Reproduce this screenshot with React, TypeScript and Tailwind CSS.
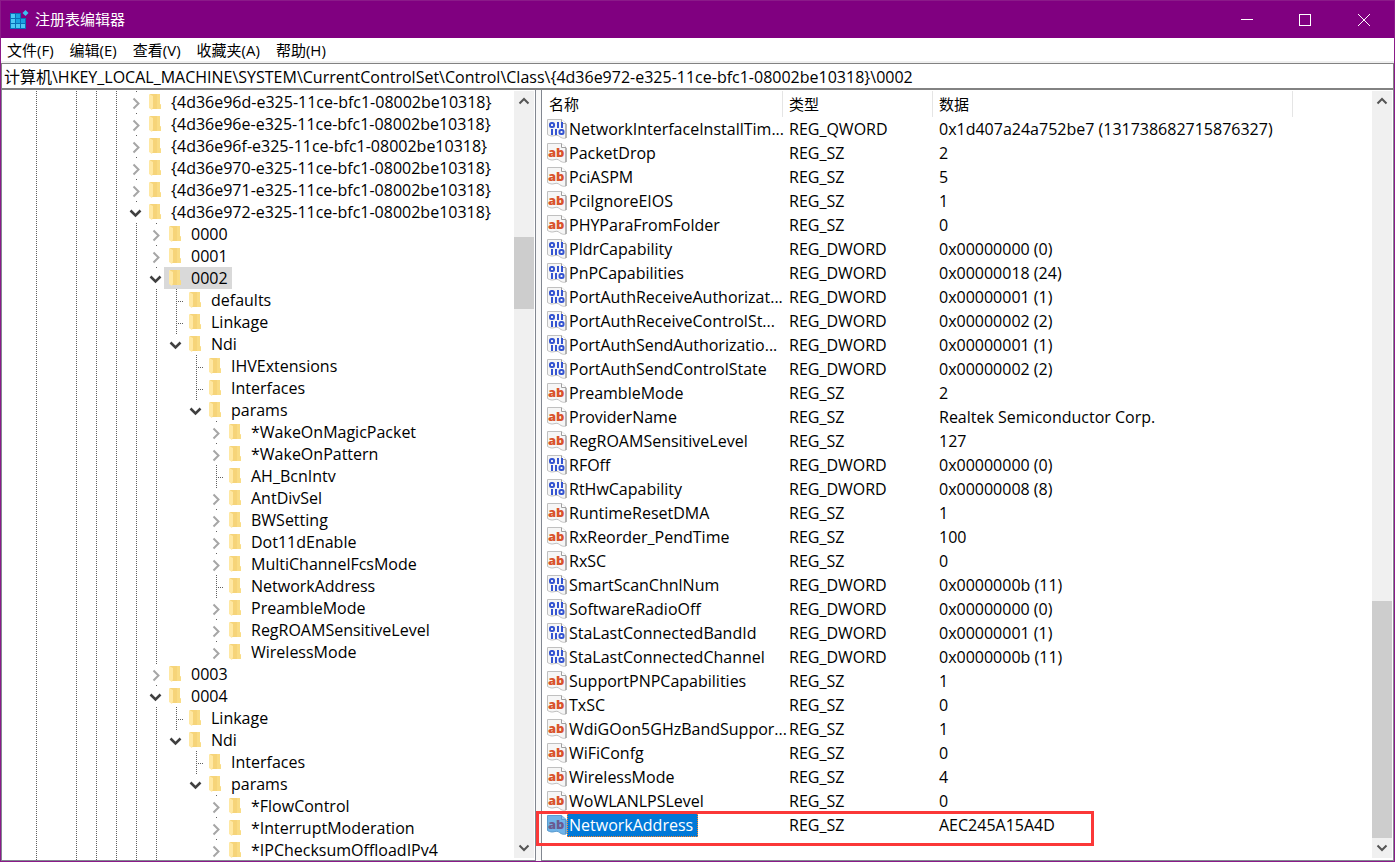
import { clsx } from 'clsx';

type TreeNode = { name: string; depth: number; state: 'open' | 'closed' | 'leaf'; selected?: boolean };
type Value = { name: string; type: string; data: string; selected?: boolean };

const menus = ['文件(F)', '编辑(E)', '查看(V)', '收藏夹(A)', '帮助(H)'];

// columns that carry a guide line through every deeper row
const guides = [true, false, true, true, true, true, true, false, false, false];

const tree: TreeNode[] = [
  { name: '{4d36e96d-e325-11ce-bfc1-08002be10318}', depth: 5, state: 'closed' },
  { name: '{4d36e96e-e325-11ce-bfc1-08002be10318}', depth: 5, state: 'closed' },
  { name: '{4d36e96f-e325-11ce-bfc1-08002be10318}', depth: 5, state: 'closed' },
  { name: '{4d36e970-e325-11ce-bfc1-08002be10318}', depth: 5, state: 'closed' },
  { name: '{4d36e971-e325-11ce-bfc1-08002be10318}', depth: 5, state: 'closed' },
  { name: '{4d36e972-e325-11ce-bfc1-08002be10318}', depth: 5, state: 'open' },
  { name: '0000', depth: 6, state: 'closed' },
  { name: '0001', depth: 6, state: 'closed' },
  { name: '0002', depth: 6, state: 'open', selected: true },
  { name: 'defaults', depth: 7, state: 'leaf' },
  { name: 'Linkage', depth: 7, state: 'leaf' },
  { name: 'Ndi', depth: 7, state: 'open' },
  { name: 'IHVExtensions', depth: 8, state: 'leaf' },
  { name: 'Interfaces', depth: 8, state: 'leaf' },
  { name: 'params', depth: 8, state: 'open' },
  { name: '*WakeOnMagicPacket', depth: 9, state: 'closed' },
  { name: '*WakeOnPattern', depth: 9, state: 'closed' },
  { name: 'AH_BcnIntv', depth: 9, state: 'leaf' },
  { name: 'AntDivSel', depth: 9, state: 'closed' },
  { name: 'BWSetting', depth: 9, state: 'closed' },
  { name: 'Dot11dEnable', depth: 9, state: 'closed' },
  { name: 'MultiChannelFcsMode', depth: 9, state: 'closed' },
  { name: 'NetworkAddress', depth: 9, state: 'leaf' },
  { name: 'PreambleMode', depth: 9, state: 'closed' },
  { name: 'RegROAMSensitiveLevel', depth: 9, state: 'closed' },
  { name: 'WirelessMode', depth: 9, state: 'closed' },
  { name: '0003', depth: 6, state: 'closed' },
  { name: '0004', depth: 6, state: 'open' },
  { name: 'Linkage', depth: 7, state: 'leaf' },
  { name: 'Ndi', depth: 7, state: 'open' },
  { name: 'Interfaces', depth: 8, state: 'leaf' },
  { name: 'params', depth: 8, state: 'open' },
  { name: '*FlowControl', depth: 9, state: 'closed' },
  { name: '*InterruptModeration', depth: 9, state: 'closed' },
  { name: '*IPChecksumOffloadIPv4', depth: 9, state: 'closed' },
];

const values: Value[] = [
  { name: 'NetworkInterfaceInstallTim...', type: 'REG_QWORD', data: '0x1d407a24a752be7 (131738682715876327)' },
  { name: 'PacketDrop', type: 'REG_SZ', data: '2' },
  { name: 'PciASPM', type: 'REG_SZ', data: '5' },
  { name: 'PciIgnoreEIOS', type: 'REG_SZ', data: '1' },
  { name: 'PHYParaFromFolder', type: 'REG_SZ', data: '0' },
  { name: 'PldrCapability', type: 'REG_DWORD', data: '0x00000000 (0)' },
  { name: 'PnPCapabilities', type: 'REG_DWORD', data: '0x00000018 (24)' },
  { name: 'PortAuthReceiveAuthorizat...', type: 'REG_DWORD', data: '0x00000001 (1)' },
  { name: 'PortAuthReceiveControlSt...', type: 'REG_DWORD', data: '0x00000002 (2)' },
  { name: 'PortAuthSendAuthorizatio...', type: 'REG_DWORD', data: '0x00000001 (1)' },
  { name: 'PortAuthSendControlState', type: 'REG_DWORD', data: '0x00000002 (2)' },
  { name: 'PreambleMode', type: 'REG_SZ', data: '2' },
  { name: 'ProviderName', type: 'REG_SZ', data: 'Realtek Semiconductor Corp.' },
  { name: 'RegROAMSensitiveLevel', type: 'REG_SZ', data: '127' },
  { name: 'RFOff', type: 'REG_DWORD', data: '0x00000000 (0)' },
  { name: 'RtHwCapability', type: 'REG_DWORD', data: '0x00000008 (8)' },
  { name: 'RuntimeResetDMA', type: 'REG_SZ', data: '1' },
  { name: 'RxReorder_PendTime', type: 'REG_SZ', data: '100' },
  { name: 'RxSC', type: 'REG_SZ', data: '0' },
  { name: 'SmartScanChnlNum', type: 'REG_DWORD', data: '0x0000000b (11)' },
  { name: 'SoftwareRadioOff', type: 'REG_DWORD', data: '0x00000000 (0)' },
  { name: 'StaLastConnectedBandId', type: 'REG_DWORD', data: '0x00000001 (1)' },
  { name: 'StaLastConnectedChannel', type: 'REG_DWORD', data: '0x0000000b (11)' },
  { name: 'SupportPNPCapabilities', type: 'REG_SZ', data: '1' },
  { name: 'TxSC', type: 'REG_SZ', data: '0' },
  { name: 'WdiGOon5GHzBandSuppor...', type: 'REG_SZ', data: '1' },
  { name: 'WiFiConfg', type: 'REG_SZ', data: '0' },
  { name: 'WirelessMode', type: 'REG_SZ', data: '4' },
  { name: 'WoWLANLPSLevel', type: 'REG_SZ', data: '0' },
  { name: 'NetworkAddress', type: 'REG_SZ', data: 'AEC245A15A4D', selected: true },
];

function AppIcon() {
  return (
    <svg width="20" height="20" viewBox="0 0 20 20" shapeRendering="crispEdges">
      <path fill="#0a6fb8" d="M1 3h11v5h5v11H1z" />
      <path fill="#4cc8f4" d="M2 4h4v4H2zM2 9h4v4H2zM7 14h4v4H7zM12 14h4v4h-4zM2 14h4v4H2z" />
      <path fill="#1ba1e2" d="M7 4h4v4H7zM7 9h4v4H7zM12 9h4v4h-4z" />
      <path fill="#3cc0f0" shapeRendering="auto" d="M16.5 0l3 3-3 3-3-3z" />
    </svg>
  );
}

function FolderIcon() {
  return (
    <svg width="16" height="22" viewBox="0 0 16 22" className="shrink-0">
      <path fill="#f6d479" d="M2 3h10v10l1 1v4H4z" />
      <path fill="#f9dc85" d="M9 3h3v10l1 1v4H9z" />
      <path fill="#ffe8a3" d="M1 3l4 2v11l-1 3-3-2z" />
    </svg>
  );
}

function GuideLine({ on }: { on: boolean }) {
  return (
    <svg width="20" height="22" className="shrink-0" shapeRendering="crispEdges">
      {on && <path d="M10.5 0v22" stroke="#606060" strokeDasharray="1 1" />}
    </svg>
  );
}

function Expander({ state }: { state: TreeNode['state'] }) {
  return (
    <svg width="18" height="22" fill="none" className="shrink-0">
      {state === 'leaf' ? (
        <path d="M10.5 0v22M12 12.5h6" stroke="#606060" strokeDasharray="1 1" shapeRendering="crispEdges" />
      ) : (
        <path d="M10 0h1v1h-1z" fill="#606060" />
      )}
      {state === 'closed' && <path d="M7.5 7.5l5 5-5 5" stroke="#a6a6a6" strokeWidth="2" />}
      {state === 'open' && <path d="M4.5 9.5l5 5 5-5" stroke="#404040" strokeWidth="2.5" />}
    </svg>
  );
}

function ValueIcon({ type, selected }: { type: string; selected?: boolean }) {
  return (
    <svg width="20" height="20" viewBox="0 0 20 20" className="shrink-0" aria-hidden="true">
      <path
        d="M.5.5h14l4.5 4v14.5c-2 .5-3 .5-5-.5s-3-3-6-2-5 .5-7.5-1z"
        fill={selected ? '#6fb3e8' : '#f6f6f6'}
        stroke={selected ? '#5a9bd0' : '#c0c0c0'}
      />
      <path d="M19 5v14" stroke={selected ? '#4a88bd' : '#8c8c8c'} />
      <path d="M14.5.5v4H19" fill={selected ? '#8cc4f0' : '#fff'} stroke={selected ? '#5a9bd0' : '#a0a0a0'} />
      {type === 'REG_SZ' ? (
        <text x="1" y="14" className="font-['Open_Sans'] text-[13px] font-extrabold" fill={selected ? '#6a5a90' : '#d9532c'}>
          ab
        </text>
      ) : (
        <g stroke="#3454d1" strokeWidth="2" fill="none">
          <rect x="3" y="4" width="4" height="4" rx="1.5" />
          <path d="M11 3v6M15 3v6M5 10v6M9 10v6" />
          <rect x="12.5" y="11" width="4" height="4" rx="1.5" />
        </g>
      )}
    </svg>
  );
}

function ScrollArrow({ down }: { down?: boolean }) {
  return (
    <button aria-label={down ? 'Scroll down' : 'Scroll up'} className="flex h-5 w-full shrink-0 items-center justify-center">
      <svg width="12" height="8" fill="none" stroke="#555" strokeWidth="2">
        <path d={down ? 'M1.5 1.5L6 6l4.5-4.5' : 'M1.5 6.5L6 2l4.5 4.5'} />
      </svg>
    </button>
  );
}

function TreeRow({ node }: { node: TreeNode }) {
  return (
    <li role="treeitem" aria-selected={!!node.selected} className="flex h-[22px] pl-6">
      {guides.slice(0, node.depth).map((on, i) => (
        <GuideLine key={i} on={on} />
      ))}
      <Expander state={node.state} />
      <button className={clsx('flex items-center pr-1 pl-1 whitespace-nowrap', node.selected && 'bg-[#d9d9d9]')}>
        <FolderIcon />
        <span className="ml-[7px]">{node.name}</span>
      </button>
    </li>
  );
}

export default function App() {
  return (
    <div className="flex h-screen flex-col overflow-hidden border border-t-0 border-[#8b1a89] bg-white font-['Open_Sans','Noto_Sans_CJK_SC',sans-serif] text-base leading-[22px] text-black">
      {/* Title bar */}
      <header className="flex h-[38px] shrink-0 items-center border-t border-[#8b1a89] bg-[#800080] pl-2 text-white">
        <AppIcon />
        <h1 className="ml-[6px] flex-1 pb-[2px] text-[15px]">注册表编辑器</h1>
        <button aria-label="Minimize" className="flex h-full w-[58px] items-center justify-center">
          <svg width="12" height="12" stroke="#fff" shapeRendering="crispEdges"><path d="M0 5.5h12" /></svg>
        </button>
        <button aria-label="Maximize" className="flex h-full w-[58px] items-center justify-center">
          <svg width="12" height="12" fill="none" stroke="#fff" shapeRendering="crispEdges"><path d="M.5.5h11v11H.5z" /></svg>
        </button>
        <button aria-label="Close" className="flex h-full w-[60px] items-center justify-center">
          <svg width="12" height="12" stroke="#fff"><path d="M0 0l12 12M12 0L0 12" /></svg>
        </button>
      </header>

      {/* Menu */}
      <nav className="flex h-[25px] shrink-0 items-center gap-4 border-b-2 border-[#f0f0f0] pl-[6px] text-[15px]">
        {menus.map((m) => (
          <button key={m}>{m}</button>
        ))}
      </nav>

      <input
        aria-label="Address"
        className="h-[27px] w-full shrink-0 border border-b-2 border-[#828282] px-[2px] pb-px outline-none"
        defaultValue="计算机\HKEY_LOCAL_MACHINE\SYSTEM\CurrentControlSet\Control\Class\{4d36e972-e325-11ce-bfc1-08002be10318}\0002"
      />

      <main className="flex min-h-0 flex-1">
        {/* Key tree */}
        <section className="flex w-[535px] shrink-0 border-r border-b border-l border-[#828790] pt-px pr-px">
          <ul role="tree" className="min-w-0 flex-1 overflow-hidden">
            {tree.map((node, i) => (
              <TreeRow key={i} node={node} />
            ))}
          </ul>
          <div className="mb-[2px] flex w-5 flex-col bg-[#f0f0f0]">
            <ScrollArrow />
            <div className="flex-[126]" />
            <div className="flex-[72] bg-[#cdcdcd]" />
            <div className="flex-[529]" />
            <ScrollArrow down />
          </div>
        </section>

        <div className="w-[5px] shrink-0 bg-[#f8f8f8]" />

        {/* Values */}
        <section className="flex min-w-0 flex-1 border-x border-b border-[#828790] pt-px pr-px">
          <div className="min-w-0 flex-1">
            <table className="w-full table-fixed border-separate border-spacing-0 text-left whitespace-nowrap">
              <colgroup>
                <col className="w-[241px]" />
                <col className="w-[150px]" />
                <col className="w-[360px]" />
                <col />
              </colgroup>
              <thead>
                <tr className="h-[26px] text-[15px]">
                  <th className="border-r border-[#e5e5e5] p-0 pl-[7px] font-normal">名称</th>
                  <th className="border-r border-[#e5e5e5] p-0 pl-[6px] font-normal">类型</th>
                  <th className="border-r border-[#e5e5e5] p-0 pl-[6px] font-normal">数据</th>
                  <td />
                </tr>
              </thead>
              <tbody>
                {values.map((v) => (
                  <tr key={v.name} className="h-6">
                    <td className="relative p-0 pl-[5px]">
                      <div className="flex h-6 items-center">
                        <ValueIcon type={v.type} selected={v.selected} />
                        <span
                          className={clsx(
                            'border border-dotted pl-px',
                            v.selected ? 'border-[#ff8728] bg-[#0078d7] pr-1 text-white' : 'border-transparent'
                          )}
                        >
                          {v.name}
                        </span>
                      </div>
                      {v.selected && (
                        <div className="pointer-events-none absolute -top-[2px] -left-[6px] h-[35px] w-[558px] border-3 border-[#fb3838]" />
                      )}
                    </td>
                    <td className="p-0 pl-[6px]">{v.type}</td>
                    <td className="p-0 pl-[6px]">{v.data}</td>
                    <td />
                  </tr>
                ))}
              </tbody>
            </table>
          </div>
          <div className="mb-[2px] flex w-5 flex-col bg-[#f0f0f0]">
            <ScrollArrow />
            <div className="flex-[490]" />
            <div className="flex-[237] bg-[#cdcdcd]" />
            <ScrollArrow down />
          </div>
        </section>
      </main>
    </div>
  );
}
